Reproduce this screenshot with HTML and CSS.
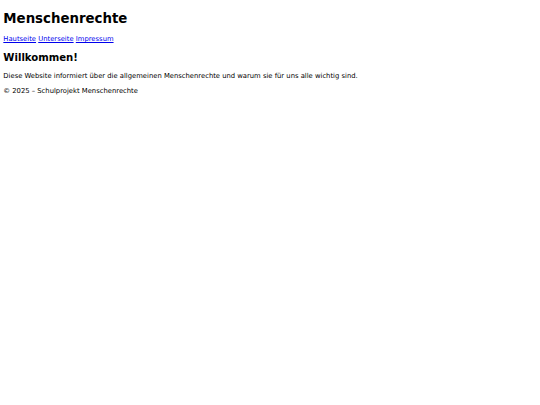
FILE: index.html
```html
<!DOCTYPE html>
<html lang="de">
<head>
<meta charset="utf-8">
<title>Menschenrechte</title>
<link rel="stylesheet" href="styles.css">
</head>
<body>
<header class="site-header">
<h1 class="title">Menschenrechte</h1>
<nav class="nav"><a href="#">Hautseite</a> <a href="#">Unterseite</a> <a href="#">Impressum</a></nav>
</header>
<main class="content">
<h2 class="heading">Willkommen!</h2>
<p class="text">Diese Website informiert über die allgemeinen Menschenrechte und warum sie für uns alle wichtig sind.</p>
</main>
<footer class="footer"><p class="text">© 2025 – Schulprojekt Menschenrechte</p></footer>
</body>
</html>
```
FILE: styles.css
```css
html { background: #fff; }
body {
  margin: 3.33px;
  font-family: "DejaVu Sans", sans-serif;
  font-size: 6.8px;
  line-height: 8px;
  color: #000;
}
.title { font-size: 13.33px; line-height: 15.5px; margin: 7.5px 0 9px; }
.heading { font-size: 10.1px; line-height: 12px; margin: 8.5px 0; }
.text { margin: 7px 0; }
.nav a { color: #0000ee; }
```
